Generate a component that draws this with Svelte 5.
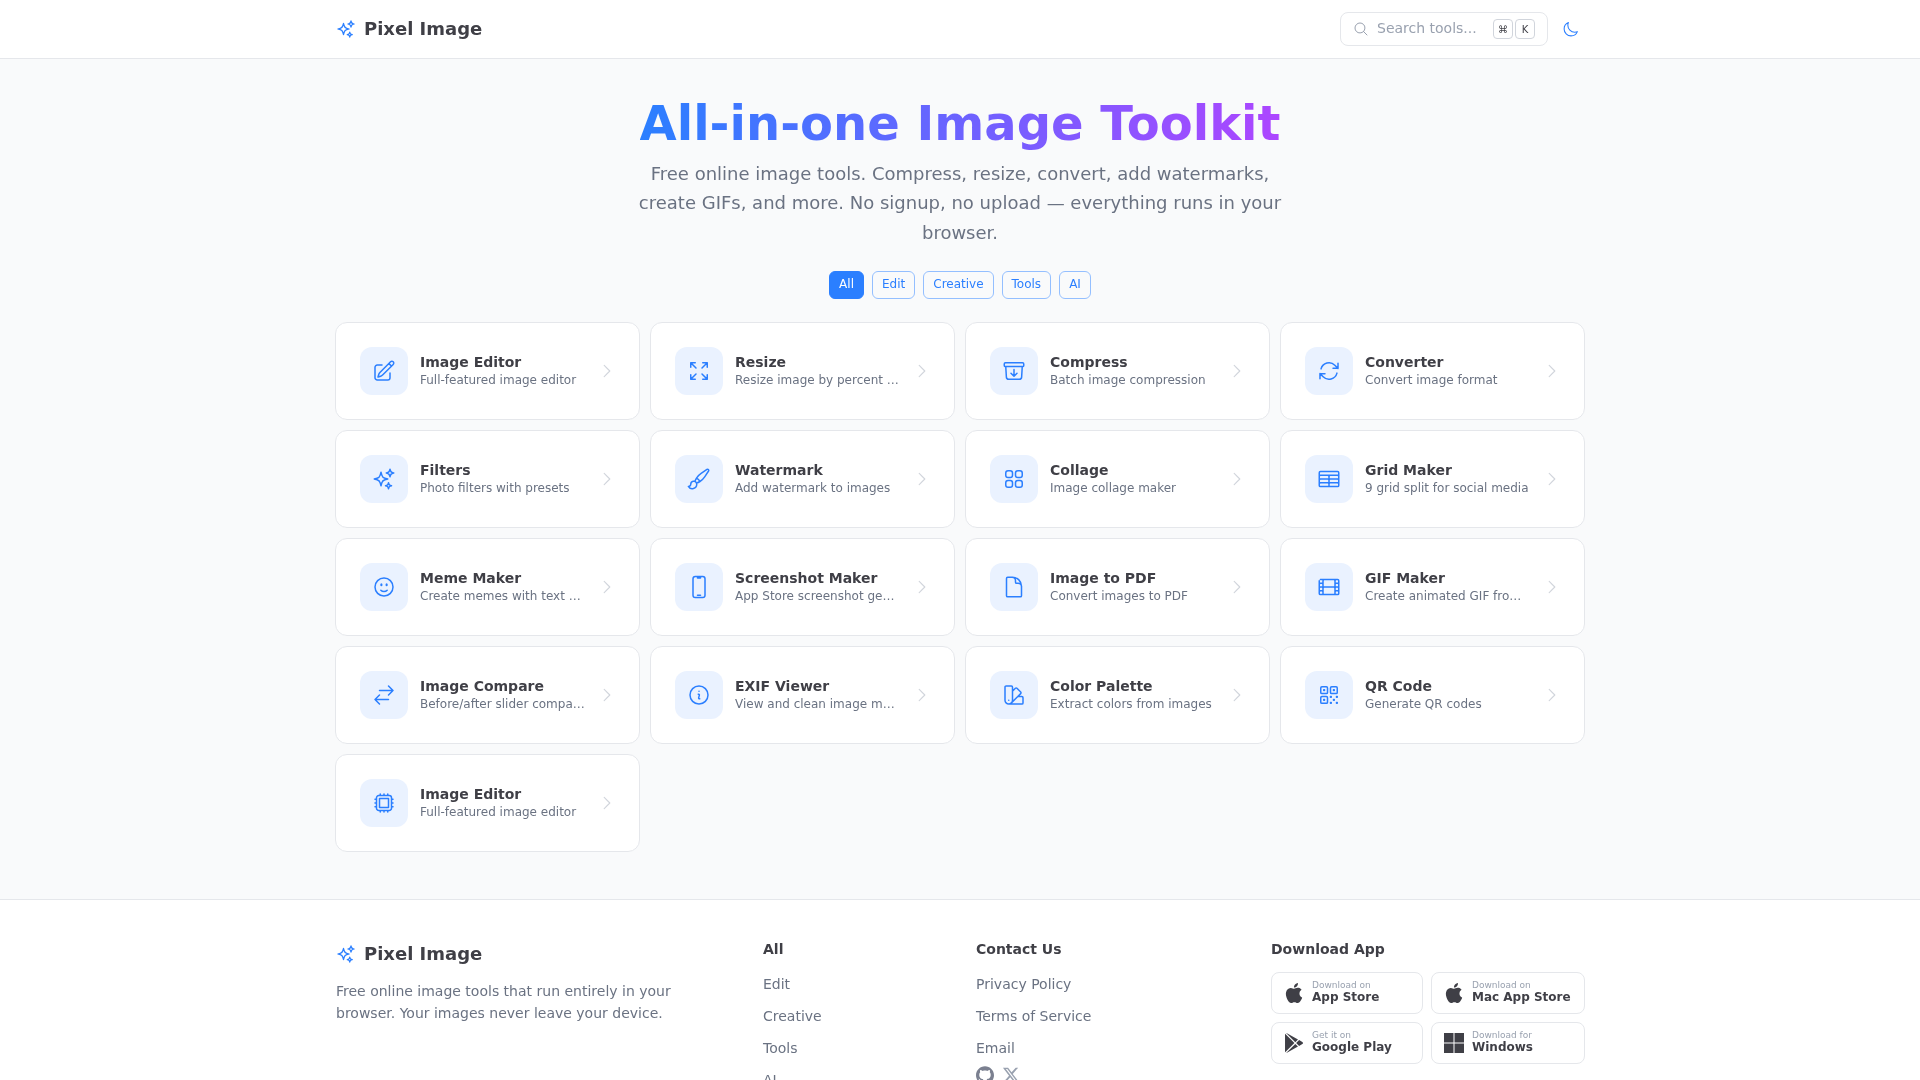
<script>
  const I = {
    sparkles: "M9.813 15.904 9 18.75l-.813-2.846a4.5 4.5 0 0 0-3.09-3.09L2.25 12l2.846-.813a4.5 4.5 0 0 0 3.09-3.09L9 5.25l.813 2.846a4.5 4.5 0 0 0 3.09 3.09L15.75 12l-2.846.813a4.5 4.5 0 0 0-3.09 3.09ZM18.259 8.715 18 9.75l-.259-1.035a3.375 3.375 0 0 0-2.455-2.456L14.25 6l1.036-.259a3.375 3.375 0 0 0 2.455-2.456L18 2.25l.259 1.035a3.375 3.375 0 0 0 2.456 2.456L21.75 6l-1.035.259a3.375 3.375 0 0 0-2.456 2.456ZM16.894 20.567 16.5 21.75l-.394-1.183a2.25 2.25 0 0 0-1.423-1.423L13.5 18.75l1.183-.394a2.25 2.25 0 0 0 1.423-1.423l.394-1.183.394 1.183a2.25 2.25 0 0 0 1.423 1.423l1.183.394-1.183.394a2.25 2.25 0 0 0-1.423 1.423Z",
    pencil: "m16.862 4.487 1.687-1.688a1.875 1.875 0 1 1 2.652 2.652L10.582 16.07a4.5 4.5 0 0 1-1.897 1.13L6 18l.8-2.685a4.5 4.5 0 0 1 1.13-1.897l8.932-8.931Zm0 0L19.5 7.125M18 14v4.75A2.25 2.25 0 0 1 15.75 21H5.25A2.25 2.25 0 0 1 3 18.75V8.25A2.25 2.25 0 0 1 5.25 6H10",
    out: "M3.75 3.75v4.5m0-4.5h4.5m-4.5 0L9 9M3.75 20.25v-4.5m0 4.5h4.5m-4.5 0L9 15M20.25 3.75h-4.5m4.5 0v4.5m0-4.5L15 9m5.25 11.25h-4.5m4.5 0v-4.5m0 4.5L15 15",
    archive: "m20.25 7.5-.625 10.632a2.25 2.25 0 0 1-2.247 2.118H6.622a2.25 2.25 0 0 1-2.247-2.118L3.75 7.5m8.25 3v6.75m0 0-3-3m3 3 3-3M3.375 7.5h17.25c.621 0 1.125-.504 1.125-1.125v-1.5c0-.621-.504-1.125-1.125-1.125H3.375c-.621 0-1.125.504-1.125 1.125v1.5c0 .621.504 1.125 1.125 1.125Z",
    path: "M16.023 9.348h4.992v-.001M2.985 19.644v-4.992m0 0h4.992m-4.993 0 3.181 3.183a8.25 8.25 0 0 0 13.803-3.7M4.031 9.865a8.25 8.25 0 0 1 13.803-3.7l3.181 3.182m0-4.991v4.99",
    brush: "M9.53 16.122a3 3 0 0 0-5.78 1.128 2.25 2.25 0 0 1-2.4 2.245 4.5 4.5 0 0 0 8.4-2.245c0-.399-.078-.78-.22-1.128Zm0 0a15.998 15.998 0 0 0 3.388-1.62m-5.043-.025a15.994 15.994 0 0 1 1.622-3.395m3.42 3.42a15.995 15.995 0 0 0 4.764-4.648l3.876-5.814a1.151 1.151 0 0 0-1.597-1.597L14.146 6.32a15.996 15.996 0 0 0-4.649 4.763m3.42 3.42a6.776 6.776 0 0 0-3.42-3.42",
    squares: "M3.75 6A2.25 2.25 0 0 1 6 3.75h2.25A2.25 2.25 0 0 1 10.5 6v2.25a2.25 2.25 0 0 1-2.25 2.25H6a2.25 2.25 0 0 1-2.25-2.25V6ZM3.75 15.75A2.25 2.25 0 0 1 6 13.5h2.25a2.25 2.25 0 0 1 2.25 2.25V18a2.25 2.25 0 0 1-2.25 2.25H6A2.25 2.25 0 0 1 3.75 18v-2.25ZM13.5 6a2.25 2.25 0 0 1 2.25-2.25H18A2.25 2.25 0 0 1 20.25 6v2.25A2.25 2.25 0 0 1 18 10.5h-2.25a2.25 2.25 0 0 1-2.25-2.25V6ZM13.5 15.75a2.25 2.25 0 0 1 2.25-2.25H18a2.25 2.25 0 0 1 2.25 2.25V18A2.25 2.25 0 0 1 18 20.25h-2.25A2.25 2.25 0 0 1 13.5 18v-2.25Z",
    table: "M3.375 19.5h17.25m-17.25 0a1.125 1.125 0 0 1-1.125-1.125M3.375 19.5h7.5c.621 0 1.125-.504 1.125-1.125m-9.75 0V5.625m0 12.75v-1.5c0-.621.504-1.125 1.125-1.125m18.375 2.625V5.625m0 12.75c0 .621-.504 1.125-1.125 1.125m1.125-1.125v-1.5c0-.621-.504-1.125-1.125-1.125m0 3.75h-7.5A1.125 1.125 0 0 1 12 18.375m9.75-12.75c0-.621-.504-1.125-1.125-1.125H3.375c-.621 0-1.125.504-1.125 1.125m19.5 0v1.5c0 .621-.504 1.125-1.125 1.125M2.25 5.625v1.5c0 .621.504 1.125 1.125 1.125m0 0h17.25m-17.25 0h7.5c.621 0 1.125.504 1.125 1.125M3.375 8.25c-.621 0-1.125.504-1.125 1.125v1.5c0 .621.504 1.125 1.125 1.125m17.25-3.75h-7.5c-.621 0-1.125.504-1.125 1.125m8.625-1.125c.621 0 1.125.504 1.125 1.125v1.5c0 .621-.504 1.125-1.125 1.125m-17.25 0h7.5m-7.5 0c-.621 0-1.125.504-1.125 1.125v1.5c0 .621.504 1.125 1.125 1.125M12 10.875v-1.5m0 1.5c0 .621-.504 1.125-1.125 1.125M12 10.875c0 .621.504 1.125 1.125 1.125m-2.25 0c.621 0 1.125.504 1.125 1.125M13.125 12h7.5m-7.5 0c-.621 0-1.125.504-1.125 1.125M20.625 12c.621 0 1.125.504 1.125 1.125v1.5c0 .621-.504 1.125-1.125 1.125m-17.25 0h7.5M12 14.625v-1.5m0 1.5c0 .621-.504 1.125-1.125 1.125M12 14.625c0 .621.504 1.125 1.125 1.125m-2.25 0c.621 0 1.125.504 1.125 1.125m0 1.5v-1.5m0 0c0-.621.504-1.125 1.125-1.125m0 0h7.5",
    smile: "M15.182 15.182a4.5 4.5 0 0 1-6.364 0M21 12a9 9 0 1 1-18 0 9 9 0 0 1 18 0ZM9.75 9.75c0 .414-.168.75-.375.75S9 10.164 9 9.75 9.168 9 9.375 9s.375.336.375.75Zm-.375 0h.008v.015h-.008V9.75Zm5.625 0c0 .414-.168.75-.375.75s-.375-.336-.375-.75.168-.75.375-.75.375.336.375.75Zm-.375 0h.008v.015h-.008V9.75Z",
    phone: "M10.5 1.5H8.25A2.25 2.25 0 0 0 6 3.75v16.5a2.25 2.25 0 0 0 2.25 2.25h7.5A2.25 2.25 0 0 0 18 20.25V3.75a2.25 2.25 0 0 0-2.25-2.25H13.5m-3 0V3h3V1.5m-3 0h3m-3 18.75h3",
    doc: "M19.5 14.25v-2.625a3.375 3.375 0 0 0-3.375-3.375h-1.5A1.125 1.125 0 0 1 13.5 7.125v-1.5a3.375 3.375 0 0 0-3.375-3.375H8.25m2.25 0H5.625c-.621 0-1.125.504-1.125 1.125v17.25c0 .621.504 1.125 1.125 1.125h12.75c.621 0 1.125-.504 1.125-1.125V11.25a9 9 0 0 0-9-9Z",
    film: "M3.375 19.5h17.25m-17.25 0a1.125 1.125 0 0 1-1.125-1.125M3.375 19.5h1.5C5.496 19.5 6 18.996 6 18.375m-3.75 0V5.625m0 12.75v-1.5c0-.621.504-1.125 1.125-1.125m18.375 2.625V5.625m0 12.75c0 .621-.504 1.125-1.125 1.125m1.125-1.125v-1.5c0-.621-.504-1.125-1.125-1.125m0 3.75h-1.5A1.125 1.125 0 0 1 18 18.375M20.625 4.5H3.375m17.25 0c.621 0 1.125.504 1.125 1.125M20.625 4.5h-1.5C18.504 4.5 18 5.004 18 5.625m3.75 0v1.5c0 .621-.504 1.125-1.125 1.125M2.25 5.625v1.5c0 .621.504 1.125 1.125 1.125m0 0h1.5m-1.5 0c-.621 0-1.125.504-1.125 1.125v1.5c0 .621.504 1.125 1.125 1.125m1.5-3.75C5.496 8.25 6 7.746 6 7.125v-1.5M4.875 8.25C5.496 8.25 6 8.754 6 9.375v1.5m0-5.25v5.25m0-5.25C6 5.004 6.504 4.5 7.125 4.5h9.75c.621 0 1.125.504 1.125 1.125m1.125 2.625h1.5m-1.5 0A1.125 1.125 0 0 1 18 7.125v-1.5m1.125 2.625c-.621 0-1.125.504-1.125 1.125v1.5m2.625-2.625c.621 0 1.125.504 1.125 1.125v1.5c0 .621-.504 1.125-1.125 1.125M18 5.625v5.25M7.125 12h9.75m-9.75 0A1.125 1.125 0 0 1 6 10.875M7.125 12C6.504 12 6 12.504 6 13.125m0-2.25C6 11.496 5.496 12 4.875 12M18 10.875c0 .621-.504 1.125-1.125 1.125M18 10.875c0 .621.504 1.125 1.125 1.125m-2.25 0c.621 0 1.125.504 1.125 1.125m-12 5.25v-5.25m0 5.25c0 .621.504 1.125 1.125 1.125h9.75c.621 0 1.125-.504 1.125-1.125m-12 0v-1.5c0-.621-.504-1.125-1.125-1.125M18 18.375v-5.25m0 5.25v-1.5c0-.621.504-1.125 1.125-1.125M18 13.125v1.5c0 .621.504 1.125 1.125 1.125M18 13.125c0-.621.504-1.125 1.125-1.125M6 13.125v1.5c0 .621-.504 1.125-1.125 1.125M6 13.125C6 12.504 5.496 12 4.875 12m-1.5 0h1.5m-1.5 0c-.621 0-1.125.504-1.125 1.125v1.5c0 .621.504 1.125 1.125 1.125M19.125 12h1.5m0 0c.621 0 1.125.504 1.125 1.125v1.5c0 .621-.504 1.125-1.125 1.125m-17.25 0h1.5m14.25 0h1.5",
    swap: "M7.5 21 3 16.5m0 0L7.5 12M3 16.5h13.5m0-13.5L21 7.5m0 0L16.5 12M21 7.5H7.5",
    info: "m11.25 11.25.041-.02a.75.75 0 0 1 1.063.852l-.708 2.836a.75.75 0 0 0 1.063.853l.041-.021M21 12a9 9 0 1 1-18 0 9 9 0 0 1 18 0Zm-9-3.75h.008v.008H12V8.25Z",
    swatch: "M4.098 19.902a3.75 3.75 0 0 0 5.304 0l6.401-6.402M6.75 21A3.75 3.75 0 0 1 3 17.25V4.125C3 3.504 3.504 3 4.125 3h5.25c.621 0 1.125.504 1.125 1.125v4.072M6.75 21a3.75 3.75 0 0 0 3.75-3.75V8.197M6.75 21h13.125c.621 0 1.125-.504 1.125-1.125v-5.25c0-.621-.504-1.125-1.125-1.125h-4.072M10.5 8.197l2.88-2.88c.438-.439 1.15-.439 1.59 0l3.712 3.713c.44.44.44 1.152 0 1.59l-2.879 2.88M6.75 17.25h.008v.008H6.75v-.008Z",
    qr: "M3.75 4.875c0-.621.504-1.125 1.125-1.125h4.5c.621 0 1.125.504 1.125 1.125v4.5c0 .621-.504 1.125-1.125 1.125h-4.5A1.125 1.125 0 0 1 3.75 9.375v-4.5ZM3.75 14.625c0-.621.504-1.125 1.125-1.125h4.5c.621 0 1.125.504 1.125 1.125v4.5c0 .621-.504 1.125-1.125 1.125h-4.5a1.125 1.125 0 0 1-1.125-1.125v-4.5ZM13.5 4.875c0-.621.504-1.125 1.125-1.125h4.5c.621 0 1.125.504 1.125 1.125v4.5c0 .621-.504 1.125-1.125 1.125h-4.5A1.125 1.125 0 0 1 13.5 9.375v-4.5ZM6.75 6.75h.75v.75h-.75v-.75ZM6.75 16.5h.75v.75h-.75v-.75ZM16.5 6.75h.75v.75h-.75v-.75ZM13.5 13.5h.75v.75h-.75v-.75ZM13.5 19.5h.75v.75h-.75v-.75ZM19.5 13.5h.75v.75h-.75v-.75ZM19.5 19.5h.75v.75h-.75v-.75ZM16.5 16.5h.75v.75h-.75v-.75Z",
    chip: "M8.25 3v1.5M4.5 8.25H3m18 0h-1.5M4.5 12H3m18 0h-1.5m-15 3.75H3m18 0h-1.5M8.25 19.5V21M12 3v1.5m0 15V21m3.75-18v1.5m0 15V21m-9-1.5h10.5a2.25 2.25 0 0 0 2.25-2.25V6.75a2.25 2.25 0 0 0-2.25-2.25H6.75A2.25 2.25 0 0 0 4.5 6.75v10.5a2.25 2.25 0 0 0 2.25 2.25Zm.75-12h9v9h-9v-9Z",
    moon: "M21.752 15.002A9.72 9.72 0 0 1 18 15.75c-5.385 0-9.75-4.365-9.75-9.75 0-1.33.266-2.597.748-3.752A9.753 9.753 0 0 0 3 11.25C3 16.635 7.365 21 12.75 21a9.753 9.753 0 0 0 9.002-5.998Z",
    search: "m21 21-5.197-5.197m0 0A7.5 7.5 0 1 0 5.196 5.196a7.5 7.5 0 0 0 10.607 10.607Z",
    chev: "m8.25 4.5 7.5 7.5-7.5 7.5"
  };
  const B = {
    apple: "M12.152 6.896c-.948 0-2.415-1.078-3.96-1.04-2.04.027-3.91 1.183-4.961 3.014-2.117 3.675-.546 9.103 1.519 12.09 1.013 1.454 2.208 3.09 3.792 3.039 1.52-.065 2.09-.987 3.935-.987 1.831 0 2.35.987 3.96.948 1.637-.026 2.676-1.48 3.676-2.948 1.156-1.688 1.636-3.325 1.662-3.415-.039-.013-3.182-1.221-3.22-4.857-.026-3.04 2.48-4.494 2.597-4.559-1.429-2.09-3.623-2.324-4.39-2.376-2-.156-3.675 1.09-4.61 1.09zM15.53 3.83c.843-1.012 1.4-2.427 1.245-3.83-1.207.052-2.662.805-3.532 1.818-.78.896-1.454 2.338-1.273 3.714 1.338.104 2.715-.688 3.559-1.701",
    play: "M22.018 13.298l-3.919 2.218-3.515-3.493 3.543-3.521 3.891 2.202a1.49 1.49 0 0 1 0 2.594zM1.337.924a1.486 1.486 0 0 0-.112.568v21.017c0 .217.045.419.124.6l11.155-11.087L1.337.924zm12.207 10.065l3.258-3.238L3.45.195a1.466 1.466 0 0 0-.946-.179l11.04 10.973zm0 2.067l-11 10.933c.298.036.612-.016.906-.183l13.324-7.54-3.23-3.21z",
    win: "M0 0h11.4v11.4H0zM12.6 0H24v11.4H12.6zM0 12.6h11.4V24H0zM12.6 12.6H24V24H12.6z",
    github: "M12 .297c-6.63 0-12 5.373-12 12 0 5.303 3.438 9.8 8.205 11.385.6.113.82-.258.82-.577 0-.285-.01-1.04-.015-2.04-3.338.724-4.042-1.61-4.042-1.61C4.422 18.07 3.633 17.7 3.633 17.7c-1.087-.744.084-.729.084-.729 1.205.084 1.838 1.236 1.838 1.236 1.07 1.835 2.809 1.305 3.495.998.108-.776.417-1.305.76-1.605-2.665-.3-5.466-1.332-5.466-5.93 0-1.31.465-2.38 1.235-3.22-.135-.303-.54-1.523.105-3.176 0 0 1.005-.322 3.3 1.23.96-.267 1.98-.399 3-.405 1.02.006 2.04.138 3 .405 2.28-1.552 3.285-1.23 3.285-1.23.645 1.653.24 2.873.12 3.176.765.84 1.23 1.91 1.23 3.22 0 4.61-2.805 5.625-5.475 5.92.42.36.81 1.096.81 2.22 0 1.606-.015 2.896-.015 3.286 0 .315.21.69.825.57C20.565 22.092 24 17.592 24 12.297c0-6.627-5.373-12-12-12",
    x: "M18.244 2.25h3.308l-7.227 8.26 8.502 11.24H16.17l-5.214-6.817L4.99 21.75H1.68l7.73-8.835L1.254 2.25H8.08l4.713 6.231zm-1.161 17.52h1.833L7.084 4.126H5.117z"
  };
  const tools = [
    ["Image Editor","Full-featured image editor","pencil"],
    ["Resize","Resize image by percent or pixels","out"],
    ["Compress","Batch image compression","archive"],
    ["Converter","Convert image format","path"],
    ["Filters","Photo filters with presets","sparkles"],
    ["Watermark","Add watermark to images","brush"],
    ["Collage","Image collage maker","squares"],
    ["Grid Maker","9 grid split for social media","table"],
    ["Meme Maker","Create memes with text overlay","smile"],
    ["Screenshot Maker","App Store screenshot generator","phone"],
    ["Image to PDF","Convert images to PDF","doc"],
    ["GIF Maker","Create animated GIF from images","film"],
    ["Image Compare","Before/after slider comparison","swap"],
    ["EXIF Viewer","View and clean image metadata","info"],
    ["Color Palette","Extract colors from images","swatch"],
    ["QR Code","Generate QR codes","qr"],
    ["Image Editor","Full-featured image editor","chip"]
  ];
  const filters = ["All","Edit","Creative","Tools","AI"];
  const stores = [
    ["Download on","App Store","apple"],
    ["Download on","Mac App Store","apple"],
    ["Get it on","Google Play","play"],
    ["Download for","Windows","win"]
  ];
</script>

<header class="top">
  <div class="wrap bar">
    <a class="logo" href="#top">
      <svg class="logo-ic" viewBox="0 0 24 24"><path d={I.sparkles}/></svg>
      <span>Pixel Image</span>
    </a>
    <div class="actions">
      <div class="search">
        <svg class="search-ic" viewBox="0 0 24 24"><path d={I.search}/></svg>
        <span class="ph">Search tools...</span>
        <span class="kbds"><kbd>⌘</kbd><kbd>K</kbd></span>
      </div>
      <button class="moon" aria-label="Theme">
        <svg viewBox="0 0 24 24"><path d={I.moon}/></svg>
      </button>
    </div>
  </div>
</header>

<main class="wrap">
  <section class="hero">
    <h1>All-in-one Image Toolkit</h1>
    <p>Free online image tools. Compress, resize, convert, add watermarks, create GIFs, and more. No signup, no upload — everything runs in your browser.</p>
    <div class="filters">
      {#each filters as f, i}
        <button class="filter" class:on={i === 0}>{f}</button>
      {/each}
    </div>
  </section>
  <section class="grid">
    {#each tools as t}
      <a class="card" href="#top">
        <span class="tile"><svg viewBox="0 0 24 24"><path d={I[t[2]]}/></svg></span>
        <span class="txt">
          <span class="name">{t[0]}</span>
          <span class="desc">{t[1]}</span>
        </span>
        <svg class="chev" viewBox="0 0 24 24"><path d={I.chev}/></svg>
      </a>
    {/each}
  </section>
</main>

<footer class="foot">
  <div class="wrap fgrid">
    <div class="about">
      <a class="logo" href="#top">
        <svg class="logo-ic" viewBox="0 0 24 24"><path d={I.sparkles}/></svg>
        <span>Pixel Image</span>
      </a>
      <p>Free online image tools that run entirely in your browser. Your images never leave your device.</p>
    </div>
    <div class="col">
      <h4>All</h4>
      <a href="#top">Edit</a><a href="#top">Creative</a><a href="#top">Tools</a><a href="#top">AI</a>
    </div>
    <div class="col">
      <h4>Contact Us</h4>
      <a href="#top">Privacy Policy</a><a href="#top">Terms of Service</a><a href="#top">Email</a>
      <div class="social">
        <svg class="gh" viewBox="0 0 24 24"><path d={B.github}/></svg>
        <svg class="xx" viewBox="0 0 24 24"><path d={B.x}/></svg>
      </div>
    </div>
    <div class="dl">
      <h4>Download App</h4>
      <div class="stores">
        {#each stores as s}
          <a class="store" href="#top">
            <svg viewBox="0 0 24 24"><path d={B[s[2]]}/></svg>
            <span class="st"><small>{s[0]}</small><b>{s[1]}</b></span>
          </a>
        {/each}
      </div>
    </div>
  </div>
</footer>

<style>
  :global(html) { background: #fff; }
  :global(body) {
    background: #f9fafb;
    font-family: "DejaVu Sans", sans-serif;
    color: #3f3f46;
  }
  a { color: inherit; text-decoration: none; }
  .wrap { width: 1250px; margin: 0 auto; }
  .top, main, .foot { opacity: 0.999; }
  .top { height: 58px; background: #fff; border-bottom: 1px solid #e5e7eb; }
  .bar { height: 100%; display: flex; align-items: center; justify-content: space-between; box-sizing: border-box; padding-left: 1px; }
  .logo { display: flex; align-items: center; gap: 8px; font-size: 18px; font-weight: 700; line-height: 28px; }
  .bar .logo { margin-top: -1px; }
  .logo-ic { width: 20px; height: 20px; fill: none; stroke: #2b7fff; stroke-width: 1.5; stroke-linecap: round; stroke-linejoin: round; }
  .actions { display: flex; align-items: center; gap: 7px; }
  .search {
    width: 208px; height: 34px; box-sizing: border-box; border: 1px solid #e5e7eb; border-radius: 8px;
    display: flex; align-items: center; padding: 0 12px; background: #fff;
  }
  .search-ic { width: 16px; height: 16px; fill: none; stroke: #99a1af; stroke-width: 1.5; stroke-linecap: round; stroke-linejoin: round; margin-right: 8px; }
  .ph { font-size: 14px; line-height: 20px; color: #99a1af; flex: 1; white-space: nowrap; margin-top: -2px; }
  .kbds { display: flex; gap: 2px; }
  kbd {
    width: 20px; height: 20px; box-sizing: border-box; border: 1px solid #d1d5dc; border-radius: 4px; background: #fff;
    font: 10px "DejaVu Sans", sans-serif; color: #3f3f46; display: flex; align-items: center; justify-content: center;
  }
  .moon { width: 30px; height: 30px; padding: 0; border: 0; background: none; display: flex; align-items: center; justify-content: center; }
  .moon svg { width: 17px; height: 17px; fill: none; stroke: #2b7fff; stroke-width: 1.5; stroke-linecap: round; stroke-linejoin: round; }

  .hero { display: flex; flex-direction: column; align-items: center; padding-top: 40px; }
  h1 {
    margin: 0; font-size: 48px; line-height: 1; font-weight: 700; text-align: center; height: 48px;
    background: linear-gradient(to right, #2b7fff, #ad46ff);
    -webkit-background-clip: text; background-clip: text; color: transparent; padding-bottom: 4px;
  }
  .hero p { margin: 8px 0 0; width: 672px; text-align: center; font-size: 18px; line-height: 29.25px; color: #6a7282; }
  .filters { display: flex; gap: 8px; margin-top: 23.75px; }
  .filter {
    height: 28px; padding: 0 9px 1px; border: 1px solid #94bfff; border-radius: 6px; background: transparent; color: #2b7fff;
    font: 12px "DejaVu Sans", sans-serif;
  }
  .filter.on { background: #2b7fff; border-color: #2b7fff; color: #fff; }

  .grid { display: grid; grid-template-columns: repeat(4, 1fr); gap: 10px; margin-top: 23.25px; padding-bottom: 47.5px; }
  .card {
    display: flex; align-items: center; gap: 12px; padding: 24px; background: #fff;
    border: 1px solid #e5e7eb; border-radius: 12px; min-width: 0;
  }
  .tile { width: 48px; height: 48px; flex: none; border-radius: 12px; background: #eaf2ff; display: flex; align-items: center; justify-content: center; }
  .tile svg { width: 24px; height: 24px; fill: none; stroke: #2b7fff; stroke-width: 1.5; stroke-linecap: round; stroke-linejoin: round; }
  .txt { flex: 1; min-width: 0; display: flex; flex-direction: column; padding-top: 1px; }
  .name { font-size: 14px; font-weight: 700; line-height: 18px; white-space: nowrap; overflow: hidden; text-overflow: ellipsis; }
  .desc { font-size: 12px; line-height: 17px; margin-top: 1px; color: #6a7282; white-space: nowrap; overflow: hidden; text-overflow: ellipsis; }
  .chev { width: 18px; height: 18px; flex: none; margin: 0 -1px; fill: none; stroke: #d1d5dc; stroke-width: 1.5; stroke-linecap: round; stroke-linejoin: round; }

  .foot { background: #fff; border-top: 1px solid #e5e7eb; padding: 32px 0 48px; }
  .fgrid { display: grid; grid-template-columns: 427px 213px 295px 314px; box-sizing: border-box; padding-left: 1px; }
  .about { width: 340px; padding-top: 8px; }
  .about p { margin: 12px 0 0; font-size: 14px; line-height: 22px; color: #6a7282; }
  h4 { margin: 0; font-size: 14px; font-weight: 700; line-height: 20px; }
  .col { display: flex; flex-direction: column; padding-top: 7px; }
  .col h4 { margin-bottom: 3px; }
  .col a { font-size: 14px; line-height: 20px; color: #6a7282; margin-top: 12px; }
  .social { display: flex; align-items: center; gap: 8px; margin-top: 8px; }
  .gh { width: 18px; height: 18px; fill: #7b8090; }
  .xx { width: 18px; height: 18px; fill: #99a1af; }
  .dl { padding-top: 7px; }
  .stores { display: grid; grid-template-columns: 152px 154px; gap: 8px; margin-top: 13px; }
  .store {
    height: 42px; box-sizing: border-box; border: 1px solid #e5e7eb; border-radius: 8px; display: flex; align-items: center;
    gap: 8px; padding: 0 12px;
  }
  .store svg { width: 20px; height: 20px; flex: none; fill: #3f3f46; }
  .st { display: flex; flex-direction: column; white-space: nowrap; padding-bottom: 2px; }
  .st small { font-size: 9px; line-height: 10px; color: #99a1af; }
  .st b { font-size: 12px; line-height: 14px; font-weight: 700; }
</style>
